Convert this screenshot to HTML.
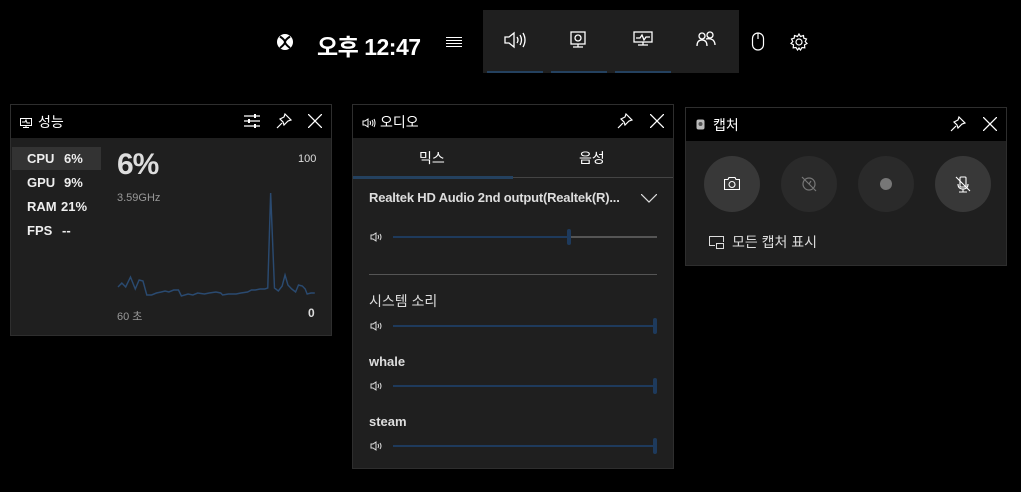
<!DOCTYPE html>
<html><head><meta charset="utf-8"><style>
*{margin:0;padding:0;box-sizing:border-box}
body{width:1021px;height:492px;background:#000;position:relative;overflow:hidden;font-family:"Liberation Sans","Noto Sans CJK KR",sans-serif;color:#fff}
.abs{position:absolute}
.panel{position:absolute;background:#1f1f1f;border:1px solid #2e2e2e}
.tb{position:absolute;left:0;right:0;top:0;background:#000;height:33px}
.t{position:absolute;white-space:nowrap}
.slider{position:absolute;height:2px;background:#1e3a5c}
.knob{position:absolute;width:4px;height:16px;background:#1e3a5c;border-radius:2px}
</style></head><body>
<svg class="abs" style="left:276px;top:33px" width="18" height="18" viewBox="0 0 18 18"><circle cx="9" cy="9" r="8" fill="#fff"/><path d="M4 3.5 Q9 7 9 9 Q9 11 4 15 M14 3.5 Q9 7 9 9 Q9 11 14 15" stroke="#000" stroke-width="2" fill="none"/></svg>
<div class="t" style="left:317px;top:28px;font-size:23px;font-weight:bold;letter-spacing:-0.5px">오후 12:47</div>
<svg class="abs" style="left:446px;top:36px" width="16" height="12"><g stroke="#fff" stroke-width="1"><path d="M0 1.5H16M0 4.5H16M0 7.5H16M0 10.5H16"/></g></svg>
<div class="abs" style="left:483px;top:10px;width:256px;height:63px;background:#1f1f1f"></div>
<div class="abs" style="left:487px;top:71px;width:56px;height:2px;background:#24415f"></div>
<div class="abs" style="left:551px;top:71px;width:56px;height:2px;background:#24415f"></div>
<div class="abs" style="left:615px;top:71px;width:56px;height:2px;background:#24415f"></div>
<svg class="abs" style="left:504px;top:31px" width="22" height="18" fill="none" stroke="#fff" stroke-width="1.3"><path d="M1 6H5L10 2V16L5 12H1Z"/><path d="M13 6Q15 9 13 12M16 4Q19 9 16 14M19 2Q23 9 19 16"/></svg>
<svg class="abs" style="left:569px;top:31px" width="18" height="18" fill="none" stroke="#fff" stroke-width="1.3"><rect x="2" y="1" width="14" height="12"/><circle cx="9" cy="7" r="3"/><path d="M9 13V16M4 16H14"/></svg>
<svg class="abs" style="left:633px;top:31px" width="20" height="16" fill="none" stroke="#fff" stroke-width="1.3"><rect x="1" y="1" width="18" height="10"/><path d="M3 7H7L9 4L11 9L13 6H17M10 11V14M5 14H15"/></svg>
<svg class="abs" style="left:696px;top:31px" width="20" height="16" fill="none" stroke="#fff" stroke-width="1.3"><circle cx="6" cy="5" r="3"/><circle cx="14" cy="4" r="3"/><path d="M1 15Q1 9 6 9Q11 9 11 15M10 8Q14 7 17 9Q19 11 19 14"/></svg>
<svg class="abs" style="left:751px;top:32px" width="14" height="20" fill="none" stroke="#fff" stroke-width="1.2"><rect x="1.5" y="1" width="11" height="17" rx="5.5"/><path d="M7 1V7"/></svg>
<svg class="abs" style="left:790px;top:33px" width="18" height="18" fill="none" stroke="#fff" stroke-width="1.2"><circle cx="9" cy="9" r="3"/><path d="M9 1L10.5 3.5L13.5 2.5L13.8 5.2L16.5 6L15.2 8.5L17 10.5L14.5 11.8L14.8 14.8L12 14.5L10.5 17L9 15L7.5 17L6 14.5L3.2 14.8L3.5 11.8L1 10.5L2.8 8.5L1.5 6L4.2 5.2L4.5 2.5L7.5 3.5Z"/></svg>

<div class="panel" style="left:10px;top:104px;width:322px;height:232px">
<div class="tb"></div>
<svg class="abs" style="left:9px;top:13px" width="12" height="10" fill="none" stroke="#fff" stroke-width="1"><rect x="0.5" y="0.5" width="11" height="7"/><path d="M2 4H5L6 2L7 5H10M6 8V9.5M3 9.5H9"/></svg>
<div class="t" style="left:27px;top:7px;font-size:14px">성능</div>
<svg class="abs" style="left:233px;top:9px" width="16" height="14" stroke="#fff" stroke-width="1.2"><path d="M0 2H16M0 7H16M0 12H16"/><path d="M11 0V4M5 5V9M11 10V14" stroke-width="2"/></svg>
<svg class="abs" style="left:265px;top:8px" width="16" height="16" fill="none" stroke="#fff" stroke-width="1.2"><path d="M9 1L15 7L12 8L8 12L7 9L4 6L8 4Z M6 10L1 15"/></svg>
<svg class="abs" style="left:297px;top:9px" width="14" height="14" stroke="#fff" stroke-width="1.3"><path d="M0 0L14 14M14 0L0 14"/></svg>
<div class="abs" style="left:1px;top:42px;width:89px;height:23px;background:#333"></div>
<div class="t" style="left:16px;top:46px;font-size:13px;font-weight:bold;color:#eee">CPU</div><div class="t" style="left:53px;top:46px;font-size:13px;font-weight:bold;color:#eee">6%</div>
<div class="t" style="left:16px;top:70px;font-size:13px;font-weight:bold;color:#eee">GPU</div><div class="t" style="left:53px;top:70px;font-size:13px;font-weight:bold;color:#eee">9%</div>
<div class="t" style="left:16px;top:94px;font-size:13px;font-weight:bold;color:#eee">RAM</div><div class="t" style="left:50px;top:94px;font-size:13px;font-weight:bold;color:#eee">21%</div>
<div class="t" style="left:16px;top:118px;font-size:13px;font-weight:bold;color:#eee">FPS</div><div class="t" style="left:51px;top:118px;font-size:13px;font-weight:bold;color:#eee">--</div>
<div class="t" style="left:106px;top:43px;font-size:30px;font-weight:bold;color:#ddd;letter-spacing:-1px">6%</div>
<div class="t" style="left:106px;top:87px;font-size:11px;color:#999">3.59GHz</div>
<div class="t" style="left:287px;top:48px;font-size:11px;color:#ddd">100</div>
<div class="t" style="left:106px;top:203px;font-size:11px;color:#999">60 초</div>
<div class="t" style="left:297px;top:201px;font-size:12px;font-weight:bold;color:#ddd">0</div>
<svg class="abs" style="left:0;top:0" width="322" height="232"><polyline transform="translate(107 0) scale(0.96 1) translate(-107 0)" fill="none" stroke="#2a4a70" stroke-width="1.5" points="107,182 111,178 115,182 120,172 125,184 129,175 133,176 137,190 142,190 147,188 152,187 156,186 160,187 165,185 170,185 173,191 180,189 185,190 190,188 197,189 202,188 209,187 214,188 216,190 222,189 230,189 235,188 242,187 246,185 250,185 255,184 260,184 263,183 266,88 270,183 274,186 278,181 281,170 284,180 288,184 292,187 295,180 299,181 302,184 304,189 308,188 312,188"/></svg>
</div>

<div class="panel" style="left:352px;top:104px;width:322px;height:365px">
<div class="tb"></div>
<svg class="abs" style="left:9px;top:13px" width="14" height="10" fill="none" stroke="#fff" stroke-width="1"><path d="M1 3H3L6 1V9L3 7H1Z M8 3Q9 5 8 7M10 2Q12 5 10 8M12 1Q14 5 12 9"/></svg>
<div class="t" style="left:27px;top:7px;font-size:14px">오디오</div>
<svg class="abs" style="left:264px;top:8px" width="16" height="16" fill="none" stroke="#fff" stroke-width="1.2"><path d="M9 1L15 7L12 8L8 12L7 9L4 6L8 4Z M6 10L1 15"/></svg>
<svg class="abs" style="left:297px;top:9px" width="14" height="14" stroke="#fff" stroke-width="1.3"><path d="M0 0L14 14M14 0L0 14"/></svg>
<div class="t" style="left:66px;top:43px;font-size:14px">믹스</div>
<div class="t" style="left:226px;top:43px;font-size:14px">음성</div>
<div class="abs" style="left:0;top:72px;width:320px;height:1px;background:#444"></div>
<div class="abs" style="left:0;top:71px;width:160px;height:3px;background:#24415f"></div>
<div class="t" style="left:16px;top:85px;font-size:13px;font-weight:bold;color:#ddd;letter-spacing:-0.2px">Realtek HD Audio 2nd output(Realtek(R)...</div>
<svg class="abs" style="left:288px;top:89px" width="16" height="9" fill="none" stroke="#ddd" stroke-width="1.2"><path d="M0 0L8 8L16 0"/></svg>
<svg class="abs" style="left:17px;top:127px" width="13" height="10" fill="none" stroke="#ddd" stroke-width="1"><path d="M1 3H3L6 1V9L3 7H1Z M8 3Q9 5 8 7M10 2Q12 5 10 8"/></svg>
<div class="slider" style="left:40px;top:131px;width:176px"></div><div class="abs" style="left:216px;top:131px;width:88px;height:2px;background:#555"></div><div class="knob" style="left:214px;top:124px"></div>
<div class="abs" style="left:16px;top:169px;width:288px;height:1px;background:#555"></div>
<div class="t" style="left:16px;top:186px;font-size:14px;color:#ddd">시스템 소리</div>
<svg class="abs" style="left:17px;top:216px" width="13" height="10" fill="none" stroke="#ddd" stroke-width="1"><path d="M1 3H3L6 1V9L3 7H1Z M8 3Q9 5 8 7M10 2Q12 5 10 8"/></svg>
<div class="slider" style="left:40px;top:220px;width:264px"></div><div class="knob" style="left:300px;top:213px"></div>
<div class="t" style="left:16px;top:249px;font-size:13px;font-weight:bold;color:#ddd">whale</div>
<svg class="abs" style="left:17px;top:276px" width="13" height="10" fill="none" stroke="#ddd" stroke-width="1"><path d="M1 3H3L6 1V9L3 7H1Z M8 3Q9 5 8 7M10 2Q12 5 10 8"/></svg>
<div class="slider" style="left:40px;top:280px;width:264px"></div><div class="knob" style="left:300px;top:273px"></div>
<div class="t" style="left:16px;top:309px;font-size:13px;font-weight:bold;color:#ddd">steam</div>
<svg class="abs" style="left:17px;top:336px" width="13" height="10" fill="none" stroke="#ddd" stroke-width="1"><path d="M1 3H3L6 1V9L3 7H1Z M8 3Q9 5 8 7M10 2Q12 5 10 8"/></svg>
<div class="slider" style="left:40px;top:340px;width:264px"></div><div class="knob" style="left:300px;top:333px"></div>
</div>

<div class="panel" style="left:685px;top:107px;width:322px;height:159px">
<div class="tb"></div>
<svg class="abs" style="left:10px;top:11px" width="9" height="11"><rect x="0.5" y="0.5" width="8" height="10" rx="2" fill="#bbb"/><circle cx="4.5" cy="5" r="2" fill="#555"/></svg>
<div class="t" style="left:27px;top:7px;font-size:14px">캡처</div>
<svg class="abs" style="left:264px;top:8px" width="16" height="16" fill="none" stroke="#fff" stroke-width="1.2"><path d="M9 1L15 7L12 8L8 12L7 9L4 6L8 4Z M6 10L1 15"/></svg>
<svg class="abs" style="left:297px;top:9px" width="14" height="14" stroke="#fff" stroke-width="1.3"><path d="M0 0L14 14M14 0L0 14"/></svg>
<div class="abs" style="left:18px;top:48px;width:56px;height:56px;border-radius:50%;background:#383838"></div>
<div class="abs" style="left:95px;top:48px;width:56px;height:56px;border-radius:50%;background:#2a2a2a"></div>
<div class="abs" style="left:172px;top:48px;width:56px;height:56px;border-radius:50%;background:#2a2a2a"></div>
<div class="abs" style="left:249px;top:48px;width:56px;height:56px;border-radius:50%;background:#383838"></div>
<svg class="abs" style="left:38px;top:69px" width="16" height="13" fill="none" stroke="#fff" stroke-width="1.1"><path d="M0.5 2.5H4L5 0.5H11L12 2.5H15.5V12.5H0.5Z"/><circle cx="8" cy="7.5" r="3"/></svg>
<svg class="abs" style="left:115px;top:68px" width="16" height="16" fill="none" stroke="#777" stroke-width="1.2"><circle cx="8" cy="8" r="6"/><path d="M1 1L15 15M8 8L10 5"/></svg>
<div class="abs" style="left:194px;top:70px;width:12px;height:12px;border-radius:50%;background:#777"></div>
<svg class="abs" style="left:269px;top:68px" width="16" height="17" fill="none" stroke="#fff" stroke-width="1.1"><rect x="5" y="1" width="6" height="10" rx="1"/><path d="M3 8Q3 13 8 13Q13 13 13 8M8 13V16M4 16H12M1 1L15 15"/></svg>
<svg class="abs" style="left:23px;top:128px" width="15" height="13" fill="none" stroke="#ddd" stroke-width="1"><path d="M6 9.5H0.5V0.5H14.5V6"/><rect x="7.5" y="7.5" width="7" height="5"/></svg>
<div class="t" style="left:46px;top:124px;font-size:14px;color:#ddd">모든 캡처 표시</div>
</div>
</body></html>
